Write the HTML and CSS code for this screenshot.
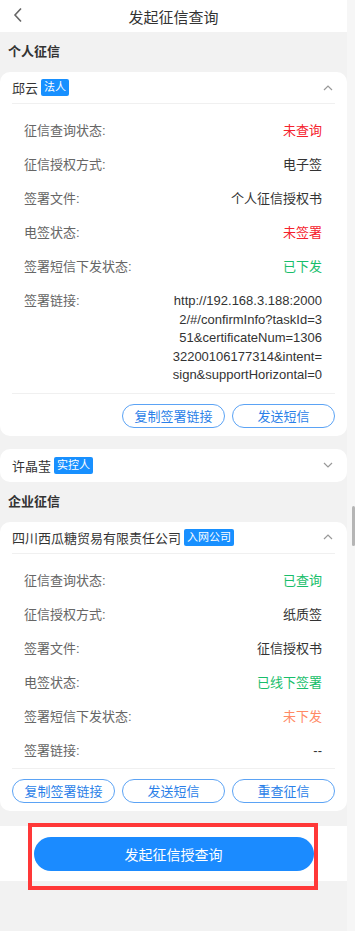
FILE: index.html
```html
<!DOCTYPE html>
<html lang="zh-CN">
<head>
<meta charset="UTF-8" />
<meta name="viewport" content="width=device-width, user-scalable=no" />
<title>发起征信查询</title>
<link rel="stylesheet" href="styles.css">
</head>
<body>
    <div class="screen">
        <div class="page">
            <div class="nav">
                <svg class="nav__back" width="10" height="16" viewBox="0 0 10 16">
                    <path d="M8 1.5L2 8l6 6.5" fill="none" stroke="#666" stroke-width="1.6"></path>
                </svg>
                <span class="nav__title">发起征信查询</span>
            </div>

            <div class="section-title">个人征信</div>

            <div class="card">
                <div class="card__head">
                    <span class="card__name">邱云</span>
                    <span class="tag">法人</span>
                    <svg class="card__arrow" width="10" height="6" viewBox="0 0 10 6">
                        <path d="M1 5l4-4 4 4" fill="none" stroke="#999" stroke-width="1.2"></path>
                    </svg>
                </div>
                <div class="rows">
                    <div class="row"><span class="label">征信查询状态:</span><span class="value value--red">未查询</span></div>
                    <div class="row"><span class="label">征信授权方式:</span><span class="value">电子签</span></div>
                    <div class="row"><span class="label">签署文件:</span><span class="value">个人征信授权书</span></div>
                    <div class="row"><span class="label">电签状态:</span><span class="value value--red">未签署</span></div>
                    <div class="row"><span class="label">签署短信下发状态:</span><span class="value value--green">已下发</span></div>
                    <div class="row"><span class="label">签署链接:</span><span class="value value--link">http://192.168.3.188:20002/#/confirmInfo?taskId=351&amp;certificateNum=130632200106177314&amp;intent=sign&amp;supportHorizontal=0</span></div>
                </div>
                <div class="actions">
                    <button class="btn">复制签署链接</button>
                    <button class="btn">发送短信</button>
                </div>
            </div>

            <div class="card card--closed">
                <div class="card__head">
                    <span class="card__name">许晶莹</span>
                    <span class="tag">实控人</span>
                    <svg class="card__arrow" width="10" height="6" viewBox="0 0 10 6">
                        <path d="M1 1l4 4 4-4" fill="none" stroke="#999" stroke-width="1.2"></path>
                    </svg>
                </div>
            </div>

            <div class="section-title">企业征信</div>

            <div class="card">
                <div class="card__head">
                    <span class="card__name">四川西瓜糖贸易有限责任公司</span>
                    <span class="tag">入网公司</span>
                    <svg class="card__arrow" width="10" height="6" viewBox="0 0 10 6">
                        <path d="M1 5l4-4 4 4" fill="none" stroke="#999" stroke-width="1.2"></path>
                    </svg>
                </div>
                <div class="rows">
                    <div class="row"><span class="label">征信查询状态:</span><span class="value value--green">已查询</span></div>
                    <div class="row"><span class="label">征信授权方式:</span><span class="value">纸质签</span></div>
                    <div class="row"><span class="label">签署文件:</span><span class="value">征信授权书</span></div>
                    <div class="row"><span class="label">电签状态:</span><span class="value value--green">已线下签署</span></div>
                    <div class="row"><span class="label">签署短信下发状态:</span><span class="value value--orange">未下发</span></div>
                    <div class="row"><span class="label">签署链接:</span><span class="value">--</span></div>
                </div>
                <div class="actions">
                    <button class="btn">复制签署链接</button>
                    <button class="btn">发送短信</button>
                    <button class="btn">重查征信</button>
                </div>
            </div>

            <div class="footer">
                <button class="submit">发起征信授查询</button>
                <div class="mark"></div>
            </div>
        </div>
        <div class="scrollbar"><div class="scrollbar__thumb"></div></div>
    </div>
</body>
</html>
```

FILE: styles.css
```css
*{
    box-sizing: border-box;
    font-family: "Liberation Sans", "Noto Sans CJK SC", sans-serif;
}
body{
    margin: 0;
    padding: 0;
    background-color: #f2f2f2;
}
.screen{
    display: flex;
    width: 355px;
    height: 931px;
    overflow: hidden;
}
.page{
    width: 347px;
    display: flex;
    flex-direction: column;
}
.nav{
    height: 32px;
    background-color: white;
    display: flex;
    align-items: center;
    justify-content: center;
    position: relative;
}
.nav__back{
    position: absolute;
    left: 13px;
    top: 7px;
}
.nav__title{
    font-size: 15px;
    color: #333;
}
.section-title{
    height: 40px;
    line-height: 40px;
    padding-left: 8px;
    font-size: 13px;
    font-weight: bold;
    color: #333;
}
.card{
    background-color: white;
    border-radius: 10px;
    padding: 0 12px;
}
.card--closed{
    margin-top: 13px;
}
.card--closed .card__head{
    height: 33px;
    border-bottom: none;
}
.card__head{
    height: 32px;
    display: flex;
    align-items: center;
    border-bottom: 1px solid #f0f0f0;
}
.card__name{
    font-size: 13px;
    color: #333;
}
.tag{
    margin-left: 3px;
    height: 17px;
    line-height: 17px;
    padding: 0 3px;
    font-size: 11px;
    color: white;
    background-color: #1890ff;
    border-radius: 2px;
}
.card__arrow{
    margin-left: auto;
    margin-right: 2px;
}
.rows{
    padding: 10px 13px 0 12px;
}
.row{
    display: flex;
    justify-content: space-between;
    align-items: flex-start;
    padding: 8px 0;
    font-size: 13px;
    line-height: 18px;
}
.label{
    color: #666;
    white-space: nowrap;
}
.value{
    color: #333;
    text-align: right;
}
.value--red{
    color: #f5222d;
}
.value--green{
    color: #19be6b;
}
.value--orange{
    color: #ff8a65;
}
.value--link{
    width: 149.4px;
    word-break: break-all;
    line-height: 18.5px;
}
.actions{
    display: flex;
    justify-content: flex-end;
    gap: 7px;
    padding: 10px 0 8px;
    border-top: 1px solid #f0f0f0;
}
.btn{
    width: 103px;
    height: 24px;
    padding: 0;
    border: 1px solid #5ba3f5;
    border-radius: 12px;
    background-color: white;
    color: #2b7fe8;
    font-size: 13px;
}
.footer{
    margin-top: 15px;
    padding: 11px 0 10px;
    background-color: white;
    display: flex;
    justify-content: center;
    position: relative;
}
.submit{
    width: 280px;
    height: 34px;
    border: none;
    border-radius: 17px;
    background-color: #1b8bff;
    color: white;
    font-size: 14px;
}
.mark{
    position: absolute;
    left: 28px;
    top: -3px;
    width: 290px;
    height: 67px;
    border: 4px solid #ff3838;
}
.scrollbar{
    width: 8px;
    background-color: #f6f6f6;
    position: relative;
}
.scrollbar__thumb{
    position: absolute;
    right: 0;
    top: 506px;
    width: 3px;
    height: 40px;
    background-color: #b5b5b5;
    border-radius: 2px;
}
```
